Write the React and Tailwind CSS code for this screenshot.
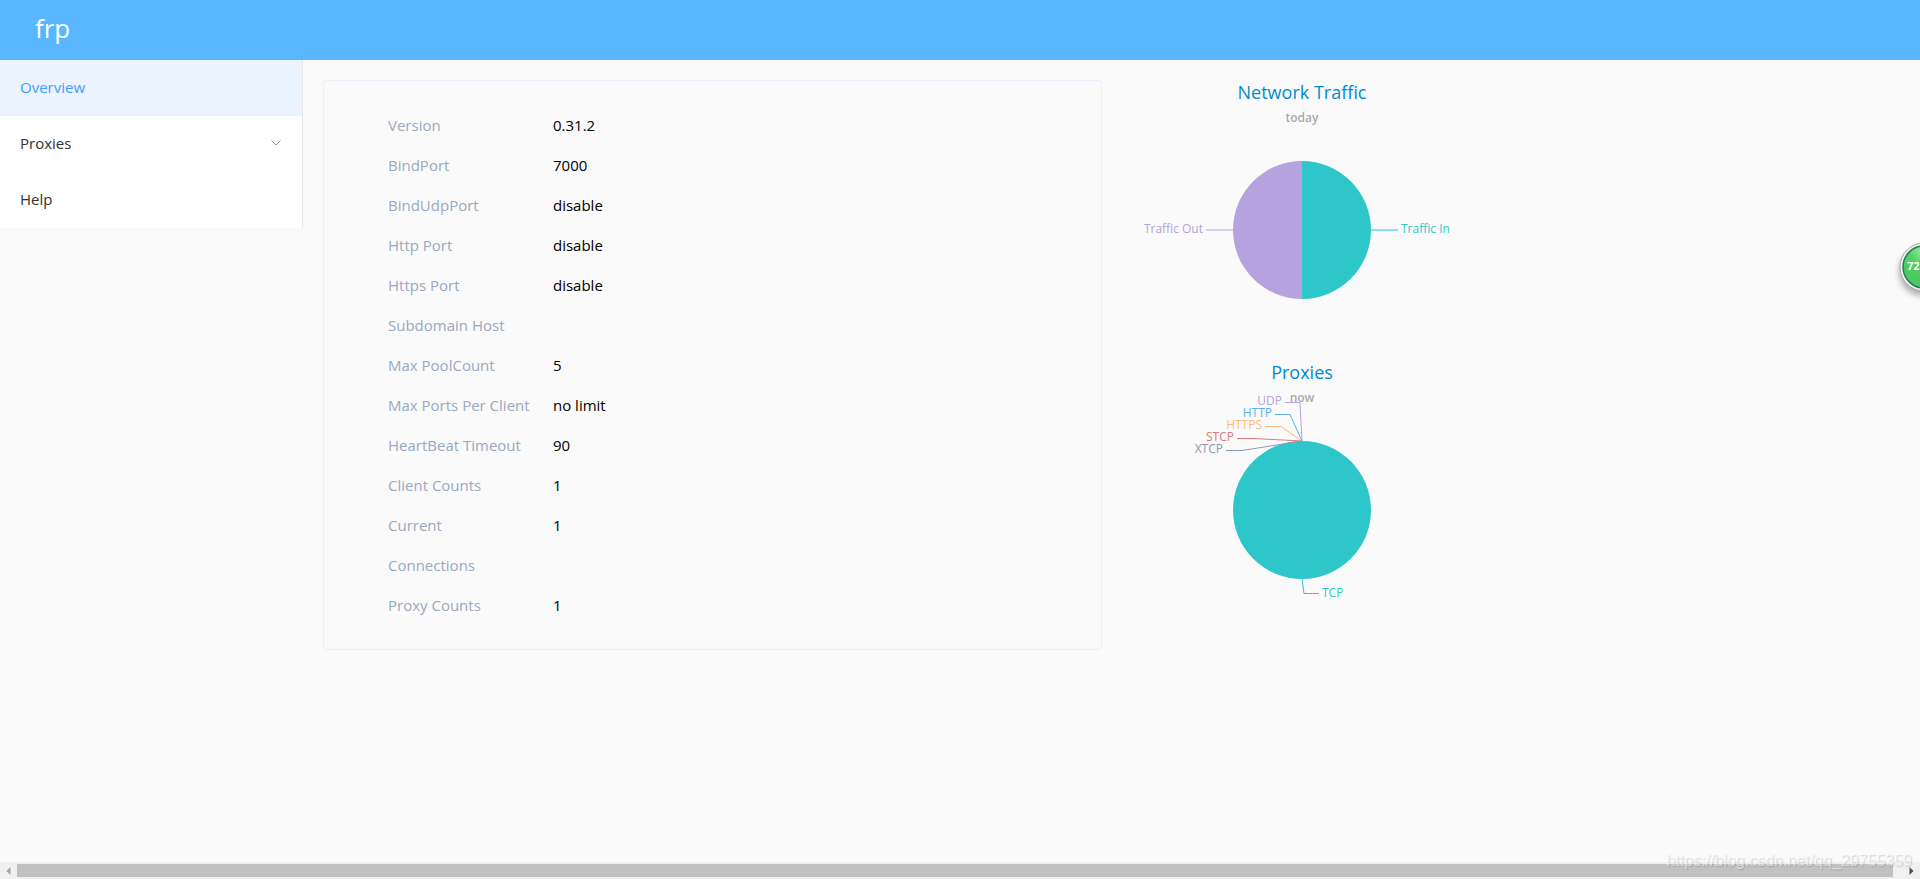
const stats = [
  ["Version", "0.31.2"],
  ["BindPort", "7000"],
  ["BindUdpPort", "disable"],
  ["Http Port", "disable"],
  ["Https Port", "disable"],
  ["Subdomain Host", ""],
  ["Max PoolCount", "5"],
  ["Max Ports Per Client", "no limit"],
  ["HeartBeat Timeout", "90"],
  ["Client Counts", "1"],
  ["Current Connections", "1"],
  ["Proxy Counts", "1"],
];

const proxyLabels = [
  { name: "UDP", color: "#b6a2de", x: 180, y: 45, line: "183,42.5 198,42.5 200,81" },
  { name: "HTTP", color: "#5ab1ef", x: 170, y: 57, line: "173,54.5 188,54.5 200,81" },
  { name: "HTTPS", color: "#ffb980", x: 160, y: 69, line: "163,66.5 179,66.5 200,81" },
  { name: "STCP", color: "#d87a80", x: 132, y: 81, line: "135,78.5 151,78.5 200,81" },
  { name: "XTCP", color: "#8d98b3", x: 121, y: 93, line: "124,90.5 140,90.5 200,81" },
];

function Header() {
  return (
    <header className="flex h-[60px] items-center bg-[#58b7ff] px-[35px]">
      <a href="#/" className="pb-1 text-[26px] leading-8 text-white">frp</a>
    </header>
  );
}

function Sidebar() {
  return (
    <nav className="w-[303px] shrink-0 border-r border-[#e6e6e6] bg-white">
      <a href="#/" className="flex h-14 items-center bg-[#ebf3ff] px-5 pb-0.5 text-[#409eff]">Overview</a>
      <button type="button" className="flex h-14 w-full items-center justify-between px-5 pb-0.5 text-[#303133]">
        Proxies
        <svg width="12" height="12" viewBox="0 0 12 12" fill="none" stroke="#909399" aria-hidden="true">
          <path d="M1.5 3.5 6 8l4.5-4.5" />
        </svg>
      </button>
      <a href="#/help" className="flex h-14 items-center px-5 pb-0.5 text-[#303133]">Help</a>
    </nav>
  );
}

function StatsCard() {
  return (
    <dl className="rounded border border-[#eaeefb] py-6 pl-16 leading-10">
      {stats.map(([label, value]) => (
        <div key={label} className="flex">
          <dt className="w-[165px] shrink-0 text-[#99a9bf]">
            {label === "Current Connections" ? <>Current<br />Connections</> : label}
          </dt>
          <dd className="text-black">{value}</dd>
        </div>
      ))}
    </dl>
  );
}

function ChartTitle({ title, subtitle }) {
  return (
    <g textAnchor="middle">
      <text x="200" y="19" fontSize="18" fill="#008acd">{title}</text>
      <text x="200" y="42" fontSize="12" fontWeight="600" fill="#aaa">{subtitle}</text>
    </g>
  );
}

function TrafficChart() {
  return (
    <svg width="400" height="280" viewBox="0 0 400 280" fontSize="12" role="img" aria-label="Network Traffic">
      <ChartTitle title="Network Traffic" subtitle="today" />
      <path d="M200 81a69 69 0 0 1 0 138z" fill="#2ec7c9" />
      <path d="M200 81a69 69 0 0 0 0 138z" fill="#b6a2de" />
      <path d="M104 150h27" stroke="#b6a2de" />
      <path d="M269 150h27" stroke="#2ec7c9" />
      <text x="101" y="153" textAnchor="end" fill="#b6a2de">Traffic Out</text>
      <text x="299" y="153" fill="#2ec7c9">Traffic In</text>
    </svg>
  );
}

function ProxiesChart() {
  return (
    <svg width="400" height="280" viewBox="0 0 400 280" fontSize="12" role="img" aria-label="Proxies">
      <ChartTitle title="Proxies" subtitle="now" />
      <circle cx="200" cy="150" r="69" fill="#2ec7c9" />
      {proxyLabels.map((p) => (
        <g key={p.name}>
          <polyline points={p.line} fill="none" stroke={p.color} />
          <text x={p.x} y={p.y} textAnchor="end" fill={p.color}>{p.name}</text>
        </g>
      ))}
      <polyline points="200,219 202,233.5 217,233.5" fill="none" stroke="#2ec7c9" />
      <text x="220" y="237" fill="#2ec7c9">TCP</text>
    </svg>
  );
}

function ScrollBar() {
  return (
    <div className="flex h-[17px] items-center bg-[#f0f0f0]">
      <button type="button" aria-label="Scroll left" className="flex w-[17px] justify-center">
        <svg width="5" height="8" viewBox="0 0 5 8" fill="#a3a3a3"><path d="M4.5 0v8L.5 4z" /></svg>
      </button>
      <div className="h-[13px] flex-1 bg-[#c1c1c1]" />
      <div className="w-[10px]" />
      <button type="button" aria-label="Scroll right" className="flex w-[17px] justify-center">
        <svg width="5" height="8" viewBox="0 0 5 8" fill="#505050"><path d="M.5 0v8l4-4z" /></svg>
      </button>
    </div>
  );
}

function SpeedBadge() {
  return (
    <svg className="absolute top-[237px] right-0" width="26" height="66" viewBox="0 0 26 66" role="img" aria-label="72">
      <defs>
        <radialGradient id="ball" cx="50%" cy="10%" r="70%">
          <stop offset="0" stopColor="#a5e8a8" />
          <stop offset="0.5" stopColor="#4fd065" />
          <stop offset="1" stopColor="#4ac95f" />
        </radialGradient>
        <filter id="soft" x="-50%" y="-50%" width="200%" height="200%"><feGaussianBlur stdDeviation="3" /></filter>
      </defs>
      <circle cx="29" cy="35" r="24" fill="#000" opacity="0.3" filter="url(#soft)" />
      <circle cx="30" cy="30" r="24" fill="#f4f4f4" stroke="#a9a9a9" />
      <circle cx="30" cy="30" r="21" fill="url(#ball)" stroke="#1c7f5c" strokeWidth="1.5" />
      <text x="13" y="33" fontSize="11" fontWeight="700" fill="#fff">72</text>
    </svg>
  );
}

export default function App() {
  return (
    <div className="relative flex min-h-screen flex-col overflow-hidden bg-[#fafafa] font-['Open_Sans','Noto_Sans',sans-serif] text-[15px]">
      <Header />
      <div className="flex flex-1 items-start">
        <Sidebar />
        <main className="grid flex-1 grid-cols-2 items-start py-5 pr-10 pl-5">
          <StatsCard />
          <div className="flex flex-col">
            <TrafficChart />
            <ProxiesChart />
          </div>
        </main>
      </div>
      <ScrollBar />
      <SpeedBadge />
      <p className="pointer-events-none absolute right-2 bottom-2 font-['Liberation_Sans',Arial,sans-serif] text-[16px] leading-5 text-white/50 [text-shadow:1px_1px_1px_rgba(0,0,0,0.15)]">
        https://blog.csdn.net/qq_29755359
      </p>
    </div>
  );
}
